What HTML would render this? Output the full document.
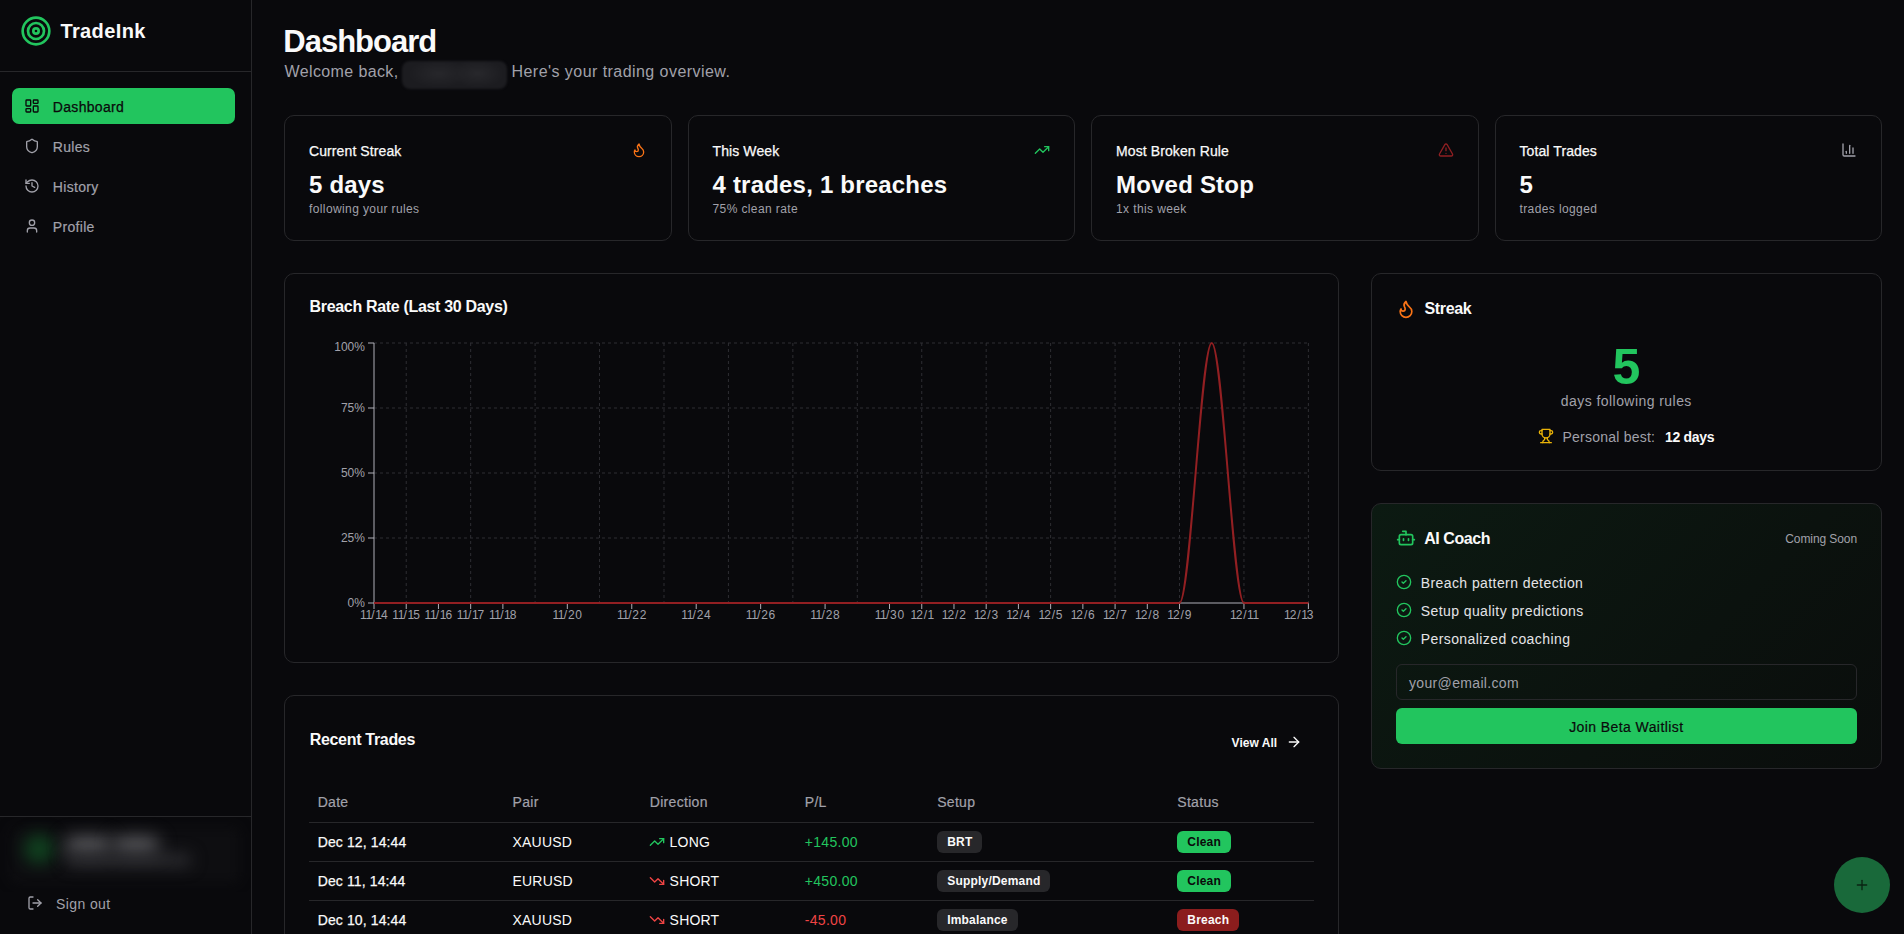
<!DOCTYPE html>
<html><head><meta charset="utf-8"><title>TradeInk Dashboard</title>
<style>
html,body{margin:0;padding:0;}
body{width:1904px;height:934px;overflow:hidden;background:#09090c;font-family:"Liberation Sans", sans-serif;position:relative;}
.t{position:absolute;line-height:1;white-space:nowrap;}
.badge{position:absolute;height:21.6px;line-height:23px;letter-spacing:0.2px;padding:0 10px;border-radius:6px;font-size:12px;font-weight:bold;white-space:nowrap;box-sizing:border-box;}
svg{overflow:visible;}
</style></head><body>
<div style="position:absolute;left:251.00px;top:0.00px;width:1.00px;height:934.00px;background:#27272a;"></div><div style="position:absolute;left:0.00px;top:71.00px;width:251.00px;height:1.00px;background:#27272a;"></div><div style="position:absolute;left:0.00px;top:816.00px;width:251.00px;height:1.00px;background:#27272a;"></div><svg style="position:absolute;left:20.00px;top:15.00px" width="32" height="32" viewBox="0 0 24 24" fill="none" stroke="#22c55e" stroke-width="2" stroke-linecap="round" stroke-linejoin="round"><circle cx="12" cy="12" r="10"/><circle cx="12" cy="12" r="6"/><circle cx="12" cy="12" r="2"/></svg><div class="t" style="left:60.40px;top:20.77px;font-size:20px;font-weight:bold;color:#fafafa;letter-spacing:0.4px;">TradeInk</div><div style="position:absolute;left:12.00px;top:88.00px;width:223.00px;height:36.00px;background:#22c55e;border-radius:7px;"></div><svg style="position:absolute;left:24.00px;top:98.00px" width="16" height="16" viewBox="0 0 24 24" fill="none" stroke="#0a0a0b" stroke-width="2" stroke-linecap="round" stroke-linejoin="round"><rect width="7" height="9" x="3" y="3" rx="1"/><rect width="7" height="5" x="14" y="3" rx="1"/><rect width="7" height="9" x="14" y="12" rx="1"/><rect width="7" height="5" x="3" y="16" rx="1"/></svg><div class="t" style="left:52.80px;top:100.15px;font-size:14px;font-weight:normal;color:#0a0a0b;letter-spacing:0.32px;-webkit-text-stroke:0.25px #0a0a0b;">Dashboard</div><svg style="position:absolute;left:24.00px;top:138.00px" width="16" height="16" viewBox="0 0 24 24" fill="none" stroke="#a1a1aa" stroke-width="2" stroke-linecap="round" stroke-linejoin="round"><path d="M20 13c0 5-3.5 7.5-7.66 8.95a1 1 0 0 1-.67-.01C7.5 20.5 4 18 4 13V6a1 1 0 0 1 1-1c2 0 4.5-1.2 6.24-2.72a1.17 1.17 0 0 1 1.52 0C14.51 3.81 17 5 19 5a1 1 0 0 1 1 1z"/></svg><div class="t" style="left:52.80px;top:140.15px;font-size:14px;font-weight:normal;color:#a1a1aa;letter-spacing:0.32px;-webkit-text-stroke:0.2px #a1a1aa;">Rules</div><svg style="position:absolute;left:24.00px;top:178.00px" width="16" height="16" viewBox="0 0 24 24" fill="none" stroke="#a1a1aa" stroke-width="2" stroke-linecap="round" stroke-linejoin="round"><path d="M3 12a9 9 0 1 0 9-9 9.75 9.75 0 0 0-6.74 2.74L3 8"/><path d="M3 3v5h5"/><path d="M12 7v5l4 2"/></svg><div class="t" style="left:52.80px;top:180.15px;font-size:14px;font-weight:normal;color:#a1a1aa;letter-spacing:0.32px;-webkit-text-stroke:0.2px #a1a1aa;">History</div><svg style="position:absolute;left:24.00px;top:218.00px" width="16" height="16" viewBox="0 0 24 24" fill="none" stroke="#a1a1aa" stroke-width="2" stroke-linecap="round" stroke-linejoin="round"><circle cx="12" cy="7" r="4"/><path d="M19 21v-2a4 4 0 0 0-4-4H9a4 4 0 0 0-4 4v2"/></svg><div class="t" style="left:52.80px;top:220.15px;font-size:14px;font-weight:normal;color:#a1a1aa;letter-spacing:0.32px;-webkit-text-stroke:0.2px #a1a1aa;">Profile</div><div style="position:absolute;left:0;top:817px;width:251px;height:75px;overflow:hidden"><div style="position:absolute;left:10px;top:10px;width:230px;height:56px;border-radius:8px;background:#0e0e11;filter:blur(6px)"></div><div style="position:absolute;left:24px;top:17px;width:30px;height:30px;border-radius:50%;background:#10401f;filter:blur(8px)"></div><div style="position:absolute;left:66px;top:21px;width:44px;height:15px;border-radius:5px;background:#68686c;filter:blur(9px)"></div><div style="position:absolute;left:114px;top:21px;width:44px;height:15px;border-radius:5px;background:#68686c;filter:blur(9px)"></div><div style="position:absolute;left:66px;top:37px;width:125px;height:12px;border-radius:5px;background:#2e2e32;filter:blur(8px)"></div></div><svg style="position:absolute;left:27.30px;top:895.00px" width="16" height="16" viewBox="0 0 24 24" fill="none" stroke="#a1a1aa" stroke-width="2" stroke-linecap="round" stroke-linejoin="round"><path d="M9 21H5a2 2 0 0 1-2-2V5a2 2 0 0 1 2-2h4"/><polyline points="16 17 21 12 16 7"/><line x1="21" x2="9" y1="12" y2="12"/></svg><div class="t" style="left:56.00px;top:897.15px;font-size:14px;font-weight:normal;color:#a1a1aa;letter-spacing:0.4px;">Sign out</div><div class="t" style="left:283.30px;top:26.06px;font-size:31px;font-weight:bold;color:#fafafa;letter-spacing:-1.0px;">Dashboard</div><div class="t" style="left:284.50px;top:64.46px;font-size:16px;font-weight:normal;color:#a1a1aa;letter-spacing:0.38px;">Welcome back,</div><div style="position:absolute;left:402.00px;top:61.00px;width:105.00px;height:28.00px;background:radial-gradient(ellipse 30px 14px at 35% 45%,#27272b,rgba(0,0,0,0)),radial-gradient(ellipse 26px 14px at 72% 45%,#28282c,rgba(0,0,0,0)),#1c1c20;border-radius:8px;filter:blur(1px);"></div><div class="t" style="left:511.50px;top:64.46px;font-size:16px;font-weight:normal;color:#a1a1aa;letter-spacing:0.45px;">Here's your trading overview.</div><div style="position:absolute;left:284.00px;top:115.00px;width:387.50px;height:126.00px;border:1px solid #27272a;border-radius:10px;box-sizing:border-box;"></div><div class="t" style="left:309.00px;top:144.15px;font-size:14px;font-weight:normal;color:#fafafa;letter-spacing:0.1px;-webkit-text-stroke:0.25px #fafafa;">Current Streak</div><svg style="position:absolute;left:630.50px;top:142.00px" width="16" height="16" viewBox="0 0 24 24" fill="none" stroke="#f97316" stroke-width="2" stroke-linecap="round" stroke-linejoin="round"><path d="M8.5 14.5A2.5 2.5 0 0 0 11 12c0-1.38-.5-2-1-3-1.072-2.143-.224-4.054 2-6 .5 2.5 2 4.9 4 6.5 2 1.6 3 3.5 3 5.5a7 7 0 1 1-14 0c0-1.153.433-2.294 1-3a2.5 2.5 0 0 0 2.5 2.5z"/></svg><div class="t" style="left:309.00px;top:172.88px;font-size:24px;font-weight:bold;color:#fafafa;letter-spacing:0.2px;">5 days</div><div class="t" style="left:309.00px;top:202.84px;font-size:12px;font-weight:normal;color:#a1a1aa;letter-spacing:0.39px;">following your rules</div><div style="position:absolute;left:687.50px;top:115.00px;width:387.50px;height:126.00px;border:1px solid #27272a;border-radius:10px;box-sizing:border-box;"></div><div class="t" style="left:712.50px;top:144.15px;font-size:14px;font-weight:normal;color:#fafafa;letter-spacing:0.1px;-webkit-text-stroke:0.25px #fafafa;">This Week</div><svg style="position:absolute;left:1034.00px;top:142.00px" width="16" height="16" viewBox="0 0 24 24" fill="none" stroke="#22c55e" stroke-width="2" stroke-linecap="round" stroke-linejoin="round"><polyline points="22 7 13.5 15.5 8.5 10.5 2 17"/><polyline points="16 7 22 7 22 13"/></svg><div class="t" style="left:712.50px;top:172.88px;font-size:24px;font-weight:bold;color:#fafafa;letter-spacing:0.2px;">4 trades, 1 breaches</div><div class="t" style="left:712.50px;top:202.84px;font-size:12px;font-weight:normal;color:#a1a1aa;letter-spacing:0.39px;">75% clean rate</div><div style="position:absolute;left:1091.00px;top:115.00px;width:387.50px;height:126.00px;border:1px solid #27272a;border-radius:10px;box-sizing:border-box;"></div><div class="t" style="left:1116.00px;top:144.15px;font-size:14px;font-weight:normal;color:#fafafa;letter-spacing:0.1px;-webkit-text-stroke:0.25px #fafafa;">Most Broken Rule</div><svg style="position:absolute;left:1437.50px;top:142.00px" width="16" height="16" viewBox="0 0 24 24" fill="none" stroke="#8f1f22" stroke-width="2" stroke-linecap="round" stroke-linejoin="round"><path d="m21.73 18-8-14a2 2 0 0 0-3.48 0l-8 14A2 2 0 0 0 4 21h16a2 2 0 0 0 1.73-3"/><path d="M12 9v4"/><path d="M12 17h.01"/></svg><div class="t" style="left:1116.00px;top:172.88px;font-size:24px;font-weight:bold;color:#fafafa;letter-spacing:0.2px;">Moved Stop</div><div class="t" style="left:1116.00px;top:202.84px;font-size:12px;font-weight:normal;color:#a1a1aa;letter-spacing:0.39px;">1x this week</div><div style="position:absolute;left:1494.50px;top:115.00px;width:387.50px;height:126.00px;border:1px solid #27272a;border-radius:10px;box-sizing:border-box;"></div><div class="t" style="left:1519.50px;top:144.15px;font-size:14px;font-weight:normal;color:#fafafa;letter-spacing:0.1px;-webkit-text-stroke:0.25px #fafafa;">Total Trades</div><svg style="position:absolute;left:1841.00px;top:142.00px" width="16" height="16" viewBox="0 0 24 24" fill="none" stroke="#a1a1aa" stroke-width="2" stroke-linecap="round" stroke-linejoin="round"><path d="M3 3v16a2 2 0 0 0 2 2h16"/><path d="M18 17V9"/><path d="M13 17V5"/><path d="M8 17v-3"/></svg><div class="t" style="left:1519.50px;top:172.88px;font-size:24px;font-weight:bold;color:#fafafa;letter-spacing:0.2px;">5</div><div class="t" style="left:1519.50px;top:202.84px;font-size:12px;font-weight:normal;color:#a1a1aa;letter-spacing:0.39px;">trades logged</div><div style="position:absolute;left:284.00px;top:273.00px;width:1054.67px;height:390.00px;border:1px solid #27272a;border-radius:10px;box-sizing:border-box;"></div><div class="t" style="left:309.50px;top:299.46px;font-size:16px;font-weight:bold;color:#fafafa;letter-spacing:-0.32px;">Breach Rate (Last 30 Days)</div><svg style="position:absolute;left:0;top:0" width="1904" height="934" viewBox="0 0 1904 934"><line x1="374.0" x2="1308.4" y1="343.00" y2="343.00" stroke="#2e2e33" stroke-dasharray="3 3"/><line x1="374.0" x2="1308.4" y1="408.00" y2="408.00" stroke="#2e2e33" stroke-dasharray="3 3"/><line x1="374.0" x2="1308.4" y1="473.00" y2="473.00" stroke="#2e2e33" stroke-dasharray="3 3"/><line x1="374.0" x2="1308.4" y1="538.00" y2="538.00" stroke="#2e2e33" stroke-dasharray="3 3"/><line x1="406.22" x2="406.22" y1="343.0" y2="603.0" stroke="#2e2e33" stroke-dasharray="3 3"/><line x1="470.66" x2="470.66" y1="343.0" y2="603.0" stroke="#2e2e33" stroke-dasharray="3 3"/><line x1="535.10" x2="535.10" y1="343.0" y2="603.0" stroke="#2e2e33" stroke-dasharray="3 3"/><line x1="599.54" x2="599.54" y1="343.0" y2="603.0" stroke="#2e2e33" stroke-dasharray="3 3"/><line x1="663.99" x2="663.99" y1="343.0" y2="603.0" stroke="#2e2e33" stroke-dasharray="3 3"/><line x1="728.43" x2="728.43" y1="343.0" y2="603.0" stroke="#2e2e33" stroke-dasharray="3 3"/><line x1="792.87" x2="792.87" y1="343.0" y2="603.0" stroke="#2e2e33" stroke-dasharray="3 3"/><line x1="857.31" x2="857.31" y1="343.0" y2="603.0" stroke="#2e2e33" stroke-dasharray="3 3"/><line x1="921.75" x2="921.75" y1="343.0" y2="603.0" stroke="#2e2e33" stroke-dasharray="3 3"/><line x1="986.19" x2="986.19" y1="343.0" y2="603.0" stroke="#2e2e33" stroke-dasharray="3 3"/><line x1="1050.63" x2="1050.63" y1="343.0" y2="603.0" stroke="#2e2e33" stroke-dasharray="3 3"/><line x1="1115.08" x2="1115.08" y1="343.0" y2="603.0" stroke="#2e2e33" stroke-dasharray="3 3"/><line x1="1179.52" x2="1179.52" y1="343.0" y2="603.0" stroke="#2e2e33" stroke-dasharray="3 3"/><line x1="1243.96" x2="1243.96" y1="343.0" y2="603.0" stroke="#2e2e33" stroke-dasharray="3 3"/><line x1="1308.40" x2="1308.40" y1="343.0" y2="603.0" stroke="#2e2e33" stroke-dasharray="3 3"/><line x1="374.0" x2="374.0" y1="343.0" y2="603.0" stroke="#b0b0b8"/><line x1="374.0" x2="1308.4" y1="603.0" y2="603.0" stroke="#b0b0b8"/><line x1="368.0" x2="374.0" y1="343.00" y2="343.00" stroke="#b0b0b8"/><line x1="368.0" x2="374.0" y1="408.00" y2="408.00" stroke="#b0b0b8"/><line x1="368.0" x2="374.0" y1="473.00" y2="473.00" stroke="#b0b0b8"/><line x1="368.0" x2="374.0" y1="538.00" y2="538.00" stroke="#b0b0b8"/><line x1="368.0" x2="374.0" y1="603.00" y2="603.00" stroke="#b0b0b8"/><line x1="374.00" x2="374.00" y1="603.0" y2="609.0" stroke="#b0b0b8"/><line x1="406.22" x2="406.22" y1="603.0" y2="609.0" stroke="#b0b0b8"/><line x1="438.44" x2="438.44" y1="603.0" y2="609.0" stroke="#b0b0b8"/><line x1="470.66" x2="470.66" y1="603.0" y2="609.0" stroke="#b0b0b8"/><line x1="502.88" x2="502.88" y1="603.0" y2="609.0" stroke="#b0b0b8"/><line x1="567.32" x2="567.32" y1="603.0" y2="609.0" stroke="#b0b0b8"/><line x1="631.77" x2="631.77" y1="603.0" y2="609.0" stroke="#b0b0b8"/><line x1="696.21" x2="696.21" y1="603.0" y2="609.0" stroke="#b0b0b8"/><line x1="760.65" x2="760.65" y1="603.0" y2="609.0" stroke="#b0b0b8"/><line x1="825.09" x2="825.09" y1="603.0" y2="609.0" stroke="#b0b0b8"/><line x1="889.53" x2="889.53" y1="603.0" y2="609.0" stroke="#b0b0b8"/><line x1="921.75" x2="921.75" y1="603.0" y2="609.0" stroke="#b0b0b8"/><line x1="953.97" x2="953.97" y1="603.0" y2="609.0" stroke="#b0b0b8"/><line x1="986.19" x2="986.19" y1="603.0" y2="609.0" stroke="#b0b0b8"/><line x1="1018.41" x2="1018.41" y1="603.0" y2="609.0" stroke="#b0b0b8"/><line x1="1050.63" x2="1050.63" y1="603.0" y2="609.0" stroke="#b0b0b8"/><line x1="1082.86" x2="1082.86" y1="603.0" y2="609.0" stroke="#b0b0b8"/><line x1="1115.08" x2="1115.08" y1="603.0" y2="609.0" stroke="#b0b0b8"/><line x1="1147.30" x2="1147.30" y1="603.0" y2="609.0" stroke="#b0b0b8"/><line x1="1179.52" x2="1179.52" y1="603.0" y2="609.0" stroke="#b0b0b8"/><line x1="1243.96" x2="1243.96" y1="603.0" y2="609.0" stroke="#b0b0b8"/><line x1="1308.40" x2="1308.40" y1="603.0" y2="609.0" stroke="#b0b0b8"/><path d="M374.0,603.0 L1179.52,603.0 C1190.26,603.0 1201.00,343.0 1211.74,343.0 C1222.48,343.0 1233.22,603.0 1243.96,603.0 L1308.4,603.0" fill="none" stroke="#921f22" stroke-width="2"/></svg><div class="t" style="right:1539.10px;top:341.04px;font-size:12px;font-weight:normal;color:#a1a1aa;letter-spacing:0px;">100%</div><div class="t" style="right:1539.10px;top:402.04px;font-size:12px;font-weight:normal;color:#a1a1aa;letter-spacing:0px;">75%</div><div class="t" style="right:1539.10px;top:466.64px;font-size:12px;font-weight:normal;color:#a1a1aa;letter-spacing:0px;">50%</div><div class="t" style="right:1539.10px;top:531.94px;font-size:12px;font-weight:normal;color:#a1a1aa;letter-spacing:0px;">25%</div><div class="t" style="right:1539.10px;top:596.74px;font-size:12px;font-weight:normal;color:#a1a1aa;letter-spacing:0px;">0%</div><div class="t" style="left:-126.00px;width:1000px;text-align:center;top:608.64px;font-size:12px;font-weight:normal;color:#a1a1aa;letter-spacing:0px;"><span style="display:inline-block;width:5.4px;text-align:center">1</span><span style="display:inline-block;width:5.4px;text-align:center">1</span><span style="display:inline-block;width:4.4px;text-align:center">/</span><span style="display:inline-block;width:5.4px;text-align:center">1</span><span style="display:inline-block;width:7.3px;text-align:center">4</span></div><div class="t" style="left:-93.78px;width:1000px;text-align:center;top:608.64px;font-size:12px;font-weight:normal;color:#a1a1aa;letter-spacing:0px;"><span style="display:inline-block;width:5.4px;text-align:center">1</span><span style="display:inline-block;width:5.4px;text-align:center">1</span><span style="display:inline-block;width:4.4px;text-align:center">/</span><span style="display:inline-block;width:5.4px;text-align:center">1</span><span style="display:inline-block;width:7.3px;text-align:center">5</span></div><div class="t" style="left:-61.56px;width:1000px;text-align:center;top:608.64px;font-size:12px;font-weight:normal;color:#a1a1aa;letter-spacing:0px;"><span style="display:inline-block;width:5.4px;text-align:center">1</span><span style="display:inline-block;width:5.4px;text-align:center">1</span><span style="display:inline-block;width:4.4px;text-align:center">/</span><span style="display:inline-block;width:5.4px;text-align:center">1</span><span style="display:inline-block;width:7.3px;text-align:center">6</span></div><div class="t" style="left:-29.34px;width:1000px;text-align:center;top:608.64px;font-size:12px;font-weight:normal;color:#a1a1aa;letter-spacing:0px;"><span style="display:inline-block;width:5.4px;text-align:center">1</span><span style="display:inline-block;width:5.4px;text-align:center">1</span><span style="display:inline-block;width:4.4px;text-align:center">/</span><span style="display:inline-block;width:5.4px;text-align:center">1</span><span style="display:inline-block;width:7.3px;text-align:center">7</span></div><div class="t" style="left:2.88px;width:1000px;text-align:center;top:608.64px;font-size:12px;font-weight:normal;color:#a1a1aa;letter-spacing:0px;"><span style="display:inline-block;width:5.4px;text-align:center">1</span><span style="display:inline-block;width:5.4px;text-align:center">1</span><span style="display:inline-block;width:4.4px;text-align:center">/</span><span style="display:inline-block;width:5.4px;text-align:center">1</span><span style="display:inline-block;width:7.3px;text-align:center">8</span></div><div class="t" style="left:67.32px;width:1000px;text-align:center;top:608.64px;font-size:12px;font-weight:normal;color:#a1a1aa;letter-spacing:0px;"><span style="display:inline-block;width:5.4px;text-align:center">1</span><span style="display:inline-block;width:5.4px;text-align:center">1</span><span style="display:inline-block;width:4.4px;text-align:center">/</span><span style="display:inline-block;width:7.3px;text-align:center">2</span><span style="display:inline-block;width:7.3px;text-align:center">0</span></div><div class="t" style="left:131.77px;width:1000px;text-align:center;top:608.64px;font-size:12px;font-weight:normal;color:#a1a1aa;letter-spacing:0px;"><span style="display:inline-block;width:5.4px;text-align:center">1</span><span style="display:inline-block;width:5.4px;text-align:center">1</span><span style="display:inline-block;width:4.4px;text-align:center">/</span><span style="display:inline-block;width:7.3px;text-align:center">2</span><span style="display:inline-block;width:7.3px;text-align:center">2</span></div><div class="t" style="left:196.21px;width:1000px;text-align:center;top:608.64px;font-size:12px;font-weight:normal;color:#a1a1aa;letter-spacing:0px;"><span style="display:inline-block;width:5.4px;text-align:center">1</span><span style="display:inline-block;width:5.4px;text-align:center">1</span><span style="display:inline-block;width:4.4px;text-align:center">/</span><span style="display:inline-block;width:7.3px;text-align:center">2</span><span style="display:inline-block;width:7.3px;text-align:center">4</span></div><div class="t" style="left:260.65px;width:1000px;text-align:center;top:608.64px;font-size:12px;font-weight:normal;color:#a1a1aa;letter-spacing:0px;"><span style="display:inline-block;width:5.4px;text-align:center">1</span><span style="display:inline-block;width:5.4px;text-align:center">1</span><span style="display:inline-block;width:4.4px;text-align:center">/</span><span style="display:inline-block;width:7.3px;text-align:center">2</span><span style="display:inline-block;width:7.3px;text-align:center">6</span></div><div class="t" style="left:325.09px;width:1000px;text-align:center;top:608.64px;font-size:12px;font-weight:normal;color:#a1a1aa;letter-spacing:0px;"><span style="display:inline-block;width:5.4px;text-align:center">1</span><span style="display:inline-block;width:5.4px;text-align:center">1</span><span style="display:inline-block;width:4.4px;text-align:center">/</span><span style="display:inline-block;width:7.3px;text-align:center">2</span><span style="display:inline-block;width:7.3px;text-align:center">8</span></div><div class="t" style="left:389.53px;width:1000px;text-align:center;top:608.64px;font-size:12px;font-weight:normal;color:#a1a1aa;letter-spacing:0px;"><span style="display:inline-block;width:5.4px;text-align:center">1</span><span style="display:inline-block;width:5.4px;text-align:center">1</span><span style="display:inline-block;width:4.4px;text-align:center">/</span><span style="display:inline-block;width:7.3px;text-align:center">3</span><span style="display:inline-block;width:7.3px;text-align:center">0</span></div><div class="t" style="left:421.75px;width:1000px;text-align:center;top:608.64px;font-size:12px;font-weight:normal;color:#a1a1aa;letter-spacing:0px;"><span style="display:inline-block;width:5.4px;text-align:center">1</span><span style="display:inline-block;width:7.3px;text-align:center">2</span><span style="display:inline-block;width:4.4px;text-align:center">/</span><span style="display:inline-block;width:5.4px;text-align:center">1</span></div><div class="t" style="left:453.97px;width:1000px;text-align:center;top:608.64px;font-size:12px;font-weight:normal;color:#a1a1aa;letter-spacing:0px;"><span style="display:inline-block;width:5.4px;text-align:center">1</span><span style="display:inline-block;width:7.3px;text-align:center">2</span><span style="display:inline-block;width:4.4px;text-align:center">/</span><span style="display:inline-block;width:7.3px;text-align:center">2</span></div><div class="t" style="left:486.19px;width:1000px;text-align:center;top:608.64px;font-size:12px;font-weight:normal;color:#a1a1aa;letter-spacing:0px;"><span style="display:inline-block;width:5.4px;text-align:center">1</span><span style="display:inline-block;width:7.3px;text-align:center">2</span><span style="display:inline-block;width:4.4px;text-align:center">/</span><span style="display:inline-block;width:7.3px;text-align:center">3</span></div><div class="t" style="left:518.41px;width:1000px;text-align:center;top:608.64px;font-size:12px;font-weight:normal;color:#a1a1aa;letter-spacing:0px;"><span style="display:inline-block;width:5.4px;text-align:center">1</span><span style="display:inline-block;width:7.3px;text-align:center">2</span><span style="display:inline-block;width:4.4px;text-align:center">/</span><span style="display:inline-block;width:7.3px;text-align:center">4</span></div><div class="t" style="left:550.63px;width:1000px;text-align:center;top:608.64px;font-size:12px;font-weight:normal;color:#a1a1aa;letter-spacing:0px;"><span style="display:inline-block;width:5.4px;text-align:center">1</span><span style="display:inline-block;width:7.3px;text-align:center">2</span><span style="display:inline-block;width:4.4px;text-align:center">/</span><span style="display:inline-block;width:7.3px;text-align:center">5</span></div><div class="t" style="left:582.86px;width:1000px;text-align:center;top:608.64px;font-size:12px;font-weight:normal;color:#a1a1aa;letter-spacing:0px;"><span style="display:inline-block;width:5.4px;text-align:center">1</span><span style="display:inline-block;width:7.3px;text-align:center">2</span><span style="display:inline-block;width:4.4px;text-align:center">/</span><span style="display:inline-block;width:7.3px;text-align:center">6</span></div><div class="t" style="left:615.08px;width:1000px;text-align:center;top:608.64px;font-size:12px;font-weight:normal;color:#a1a1aa;letter-spacing:0px;"><span style="display:inline-block;width:5.4px;text-align:center">1</span><span style="display:inline-block;width:7.3px;text-align:center">2</span><span style="display:inline-block;width:4.4px;text-align:center">/</span><span style="display:inline-block;width:7.3px;text-align:center">7</span></div><div class="t" style="left:647.30px;width:1000px;text-align:center;top:608.64px;font-size:12px;font-weight:normal;color:#a1a1aa;letter-spacing:0px;"><span style="display:inline-block;width:5.4px;text-align:center">1</span><span style="display:inline-block;width:7.3px;text-align:center">2</span><span style="display:inline-block;width:4.4px;text-align:center">/</span><span style="display:inline-block;width:7.3px;text-align:center">8</span></div><div class="t" style="left:679.52px;width:1000px;text-align:center;top:608.64px;font-size:12px;font-weight:normal;color:#a1a1aa;letter-spacing:0px;"><span style="display:inline-block;width:5.4px;text-align:center">1</span><span style="display:inline-block;width:7.3px;text-align:center">2</span><span style="display:inline-block;width:4.4px;text-align:center">/</span><span style="display:inline-block;width:7.3px;text-align:center">9</span></div><div class="t" style="left:743.96px;width:1000px;text-align:center;top:608.64px;font-size:12px;font-weight:normal;color:#a1a1aa;letter-spacing:0px;"><span style="display:inline-block;width:5.4px;text-align:center">1</span><span style="display:inline-block;width:7.3px;text-align:center">2</span><span style="display:inline-block;width:4.4px;text-align:center">/</span><span style="display:inline-block;width:5.4px;text-align:center">1</span><span style="display:inline-block;width:5.4px;text-align:center">1</span></div><div class="t" style="right:590.20px;top:608.64px;font-size:12px;font-weight:normal;color:#a1a1aa;letter-spacing:0px;"><span style="display:inline-block;width:5.4px;text-align:center">1</span><span style="display:inline-block;width:7.3px;text-align:center">2</span><span style="display:inline-block;width:4.4px;text-align:center">/</span><span style="display:inline-block;width:5.4px;text-align:center">1</span><span style="display:inline-block;width:7.3px;text-align:center">3</span></div><div style="position:absolute;left:1370.67px;top:273.00px;width:511.33px;height:198.00px;border:1px solid #27272a;border-radius:10px;box-sizing:border-box;"></div><svg style="position:absolute;left:1396.00px;top:298.50px" width="20" height="20" viewBox="0 0 24 24" fill="none" stroke="#f97316" stroke-width="2" stroke-linecap="round" stroke-linejoin="round"><path d="M8.5 14.5A2.5 2.5 0 0 0 11 12c0-1.38-.5-2-1-3-1.072-2.143-.224-4.054 2-6 .5 2.5 2 4.9 4 6.5 2 1.6 3 3.5 3 5.5a7 7 0 1 1-14 0c0-1.153.433-2.294 1-3a2.5 2.5 0 0 0 2.5 2.5z"/></svg><div class="t" style="left:1424.40px;top:301.36px;font-size:16px;font-weight:bold;color:#fafafa;letter-spacing:-0.32px;">Streak</div><div class="t" style="left:1126.34px;width:1000px;text-align:center;top:342.48px;font-size:50px;font-weight:bold;color:#22c55e;letter-spacing:0px;">5</div><div class="t" style="left:1126.34px;width:1000px;text-align:center;top:393.75px;font-size:14px;font-weight:normal;color:#a1a1aa;letter-spacing:0.44px;">days following rules</div><svg style="position:absolute;left:1538.00px;top:428.00px" width="16" height="16" viewBox="0 0 24 24" fill="none" stroke="#eab308" stroke-width="2" stroke-linecap="round" stroke-linejoin="round"><path d="M6 9H4.5a2.5 2.5 0 0 1 0-5H6"/><path d="M18 9h1.5a2.5 2.5 0 0 0 0-5H18"/><path d="M4 22h16"/><path d="M10 14.66V17c0 .55-.47.98-.97 1.21C7.85 18.75 7 20.24 7 22"/><path d="M14 14.66V17c0 .55.47.98.97 1.21C16.15 18.75 17 20.24 17 22"/><path d="M18 2H6v7a6 6 0 0 0 12 0V2Z"/></svg><div class="t" style="left:1562.40px;top:430.05px;font-size:14px;font-weight:normal;color:#a1a1aa;letter-spacing:0.24px;">Personal best:</div><div class="t" style="left:1664.90px;top:430.05px;font-size:14px;font-weight:bold;color:#fafafa;letter-spacing:-0.28px;">12 days</div><div style="position:absolute;left:1370.67px;top:503.00px;width:511.33px;height:266.00px;border:1px solid #27272a;border-radius:10px;box-sizing:border-box;background:linear-gradient(135deg,#0c1a12 0%,#0b120e 60%,#0a0d0c 100%);"></div><svg style="position:absolute;left:1396.00px;top:528.00px" width="20" height="20" viewBox="0 0 24 24" fill="none" stroke="#22c55e" stroke-width="2" stroke-linecap="round" stroke-linejoin="round"><path d="M12 8V4H8"/><rect width="16" height="12" x="4" y="8" rx="2"/><path d="M2 14h2"/><path d="M20 14h2"/><path d="M15 13v2"/><path d="M9 13v2"/></svg><div class="t" style="left:1424.20px;top:531.46px;font-size:16px;font-weight:bold;color:#fafafa;letter-spacing:-0.42px;">AI Coach</div><div class="t" style="right:47.00px;top:532.74px;font-size:12px;font-weight:normal;color:#a1a1aa;letter-spacing:-0.09px;">Coming Soon</div><svg style="position:absolute;left:1396.00px;top:574.00px" width="16" height="16" viewBox="0 0 24 24" fill="none" stroke="#22c55e" stroke-width="2" stroke-linecap="round" stroke-linejoin="round"><circle cx="12" cy="12" r="10"/><path d="m9 12 2 2 4-4"/></svg><div class="t" style="left:1420.70px;top:576.35px;font-size:14px;font-weight:normal;color:#e4e4e7;letter-spacing:0.42px;">Breach pattern detection</div><svg style="position:absolute;left:1396.00px;top:602.00px" width="16" height="16" viewBox="0 0 24 24" fill="none" stroke="#22c55e" stroke-width="2" stroke-linecap="round" stroke-linejoin="round"><circle cx="12" cy="12" r="10"/><path d="m9 12 2 2 4-4"/></svg><div class="t" style="left:1420.70px;top:604.35px;font-size:14px;font-weight:normal;color:#e4e4e7;letter-spacing:0.42px;">Setup quality predictions</div><svg style="position:absolute;left:1396.00px;top:630.00px" width="16" height="16" viewBox="0 0 24 24" fill="none" stroke="#22c55e" stroke-width="2" stroke-linecap="round" stroke-linejoin="round"><circle cx="12" cy="12" r="10"/><path d="m9 12 2 2 4-4"/></svg><div class="t" style="left:1420.70px;top:632.35px;font-size:14px;font-weight:normal;color:#e4e4e7;letter-spacing:0.42px;">Personalized coaching</div><div style="position:absolute;left:1396.00px;top:664.00px;width:461.00px;height:36.00px;border:1px solid #27272a;border-radius:6px;box-sizing:border-box;background:transparent;"></div><div class="t" style="left:1409.00px;top:675.95px;font-size:14px;font-weight:normal;color:#a1a1aa;letter-spacing:0.34px;">your@email.com</div><div style="position:absolute;left:1396.00px;top:708.00px;width:461.00px;height:36.00px;background:#22c55e;border-radius:6px;"></div><div class="t" style="left:1126.34px;width:1000px;text-align:center;top:720.05px;font-size:14px;font-weight:normal;color:#0a0a0b;letter-spacing:0.41px;-webkit-text-stroke:0.2px #0a0a0b;">Join Beta Waitlist</div><div style="position:absolute;left:284.00px;top:695.00px;width:1054.67px;height:300.00px;border:1px solid #27272a;border-radius:10px;box-sizing:border-box;"></div><div class="t" style="left:309.70px;top:731.66px;font-size:16px;font-weight:bold;color:#fafafa;letter-spacing:-0.31px;">Recent Trades</div><div class="t" style="left:1231.60px;top:736.84px;font-size:12px;font-weight:bold;color:#fafafa;letter-spacing:0.03px;">View All</div><svg style="position:absolute;left:1286.00px;top:734.00px" width="16" height="16" viewBox="0 0 24 24" fill="none" stroke="#fafafa" stroke-width="2" stroke-linecap="round" stroke-linejoin="round"><path d="M5 12h14"/><path d="m12 5 7 7-7 7"/></svg><div class="t" style="left:317.70px;top:795.05px;font-size:14px;font-weight:normal;color:#a1a1aa;letter-spacing:0.3px;-webkit-text-stroke:0.2px #a1a1aa;">Date</div><div class="t" style="left:512.50px;top:795.05px;font-size:14px;font-weight:normal;color:#a1a1aa;letter-spacing:0.3px;-webkit-text-stroke:0.2px #a1a1aa;">Pair</div><div class="t" style="left:649.80px;top:795.05px;font-size:14px;font-weight:normal;color:#a1a1aa;letter-spacing:0.3px;-webkit-text-stroke:0.2px #a1a1aa;">Direction</div><div class="t" style="left:804.80px;top:795.05px;font-size:14px;font-weight:normal;color:#a1a1aa;letter-spacing:0.3px;-webkit-text-stroke:0.2px #a1a1aa;">P/L</div><div class="t" style="left:937.20px;top:795.05px;font-size:14px;font-weight:normal;color:#a1a1aa;letter-spacing:0.3px;-webkit-text-stroke:0.2px #a1a1aa;">Setup</div><div class="t" style="left:1177.30px;top:795.05px;font-size:14px;font-weight:normal;color:#a1a1aa;letter-spacing:0.3px;-webkit-text-stroke:0.2px #a1a1aa;">Status</div><div style="position:absolute;left:309.00px;top:822.00px;width:1005.00px;height:1.00px;background:#27272a;"></div><div style="position:absolute;left:309.00px;top:861.00px;width:1005.00px;height:1.00px;background:#27272a;"></div><div class="t" style="left:317.70px;top:835.25px;font-size:14px;font-weight:normal;color:#fafafa;letter-spacing:0.12px;-webkit-text-stroke:0.25px #fafafa;">Dec 12, 14:44</div><div class="t" style="left:512.50px;top:835.25px;font-size:14px;font-weight:normal;color:#fafafa;letter-spacing:0.2px;">XAUUSD</div><svg style="position:absolute;left:649.30px;top:834.00px" width="16" height="16" viewBox="0 0 24 24" fill="none" stroke="#22c55e" stroke-width="2" stroke-linecap="round" stroke-linejoin="round"><polyline points="22 7 13.5 15.5 8.5 10.5 2 17"/><polyline points="16 7 22 7 22 13"/></svg><div class="t" style="left:669.60px;top:835.25px;font-size:14px;font-weight:normal;color:#fafafa;letter-spacing:0.2px;">LONG</div><div class="t" style="left:804.80px;top:835.25px;font-size:14px;font-weight:normal;color:#22c55e;letter-spacing:0.3px;">+145.00</div><div class="badge" style="left:937.2px;top:831.2px;background:#27272a;color:#fafafa">BRT</div><div class="badge" style="left:1177.3px;top:831.2px;background:#22c55e;color:#0a0a0b">Clean</div><div style="position:absolute;left:309.00px;top:900.00px;width:1005.00px;height:1.00px;background:#27272a;"></div><div class="t" style="left:317.70px;top:874.25px;font-size:14px;font-weight:normal;color:#fafafa;letter-spacing:0.12px;-webkit-text-stroke:0.25px #fafafa;">Dec 11, 14:44</div><div class="t" style="left:512.50px;top:874.25px;font-size:14px;font-weight:normal;color:#fafafa;letter-spacing:0.2px;">EURUSD</div><svg style="position:absolute;left:649.30px;top:873.00px" width="16" height="16" viewBox="0 0 24 24" fill="none" stroke="#ef4444" stroke-width="2" stroke-linecap="round" stroke-linejoin="round"><polyline points="22 17 13.5 8.5 8.5 13.5 2 7"/><polyline points="16 17 22 17 22 11"/></svg><div class="t" style="left:669.60px;top:874.25px;font-size:14px;font-weight:normal;color:#fafafa;letter-spacing:0.2px;">SHORT</div><div class="t" style="left:804.80px;top:874.25px;font-size:14px;font-weight:normal;color:#22c55e;letter-spacing:0.3px;">+450.00</div><div class="badge" style="left:937.2px;top:870.2px;background:#27272a;color:#fafafa">Supply/Demand</div><div class="badge" style="left:1177.3px;top:870.2px;background:#22c55e;color:#0a0a0b">Clean</div><div class="t" style="left:317.70px;top:913.25px;font-size:14px;font-weight:normal;color:#fafafa;letter-spacing:0.12px;-webkit-text-stroke:0.25px #fafafa;">Dec 10, 14:44</div><div class="t" style="left:512.50px;top:913.25px;font-size:14px;font-weight:normal;color:#fafafa;letter-spacing:0.2px;">XAUUSD</div><svg style="position:absolute;left:649.30px;top:912.00px" width="16" height="16" viewBox="0 0 24 24" fill="none" stroke="#ef4444" stroke-width="2" stroke-linecap="round" stroke-linejoin="round"><polyline points="22 17 13.5 8.5 8.5 13.5 2 7"/><polyline points="16 17 22 17 22 11"/></svg><div class="t" style="left:669.60px;top:913.25px;font-size:14px;font-weight:normal;color:#fafafa;letter-spacing:0.2px;">SHORT</div><div class="t" style="left:804.80px;top:913.25px;font-size:14px;font-weight:normal;color:#ef4444;letter-spacing:0.3px;">-45.00</div><div class="badge" style="left:937.2px;top:909.2px;background:#27272a;color:#fafafa">Imbalance</div><div class="badge" style="left:1177.3px;top:909.2px;background:#8b1d1d;color:#fafafa">Breach</div><div style="position:absolute;left:1834.00px;top:857.00px;width:56.00px;height:56.00px;background:#19693a;border-radius:50%;"></div><svg style="position:absolute;left:1854.00px;top:877.00px" width="16" height="16" viewBox="0 0 24 24" fill="none" stroke="#0a2413" stroke-width="2" stroke-linecap="round" stroke-linejoin="round"><path d="M5 12h14"/><path d="M12 5v14"/></svg>
</body></html>
